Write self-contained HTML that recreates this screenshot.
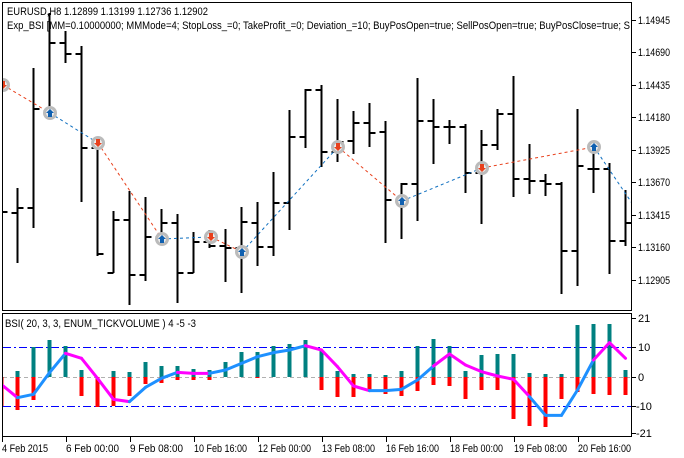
<!DOCTYPE html>
<html><head><meta charset="utf-8"><style>
html,body{margin:0;padding:0;background:#fff;width:684px;height:458px;overflow:hidden}
svg{display:block;font-family:"Liberation Sans",sans-serif;font-size:11px}
</style></head><body>
<svg id="s" width="684" height="458" xmlns="http://www.w3.org/2000/svg"></svg>
<script>
var o=[];
function P(s){o.push(s);}
var B=[[200,230,212,212],[188,263,213,208],[68,228,208,109],[13,110,111,43],[31,63,43,54],[46,202,54,148],[144,256,148,254],[211,273,273,220],[191,305,220,275],[197,281,275,237],[209,237,237,223],[214,303,223,273],[232,273,273,242],[230,248,242,246],[229,282,246,248],[207,293,248,222],[202,266,223,247],[172,256,247,203],[110,230,203,137],[89,148,137,90],[85,167,90,152],[99,162,152,142],[111,154,141,123],[103,147,123,133],[121,243,132,200],[183,239,200,184],[78,221,184,121],[99,164,121,127],[120,144,127,127],[124,193,127,173],[130,224,173,145],[109,150,145,114],[76,197,114,179],[144,194,179,181],[174,196,181,184],[182,294,184,251],[109,286,251,166],[141,193,169,169],[163,274,169,241],[190,246,241,223]];
function X(i){return 1.5+16*i;}
P('<defs><clipPath id="m"><rect x="3" y="3" width="629" height="307"/></clipPath><clipPath id="b"><rect x="3" y="314" width="629" height="123"/></clipPath></defs>');
P('<g clip-path="url(#m)">');
for(var i=0;i<B.length;i++){var x=X(i),b=B[i];
P('<rect x="'+(x-1)+'" y="'+b[0]+'" width="2" height="'+(b[1]-b[0])+'" fill="#000"/>');
P('<rect x="'+(x-6)+'" y="'+(b[2]-1)+'" width="6" height="2" fill="#000"/>');
P('<rect x="'+(x)+'" y="'+(b[3]-1)+'" width="6" height="2" fill="#000"/>');}
var M=[[-40,70,'B'],[3,85,'R'],[50,113,'B'],[98,143,'R'],[162,239,'B'],[211,237,'R'],[242,252,'B'],[338,147,'R'],[402,201,'B'],[482,168,'R'],[594,147,'B'],[640,215,'X']];
for(var i=0;i<M.length-1;i++){var a=M[i],c=M[i+1];var col=a[2]=='R'?'#e8401c':'#1070c0';
P('<line x1="'+a[0]+'" y1="'+a[1]+'" x2="'+c[0]+'" y2="'+c[1]+'" stroke="'+col+'" stroke-width="1" stroke-dasharray="3,3"/>');}
for(var i=1;i<M.length-1;i++){var a=M[i],x=a[0],y=a[1];
P('<circle cx="'+x+'" cy="'+y+'" r="5.5" fill="#ececec" stroke="#bbbbbb" stroke-width="3"/>');
if(a[2]=='B')P('<path d="M'+x+' '+(y-4)+'l4 4h-2v4h-4v-4h-2z" fill="#1060b0"/>');
else P('<path d="M'+x+' '+(y+4)+'l4 -4h-2v-4h-4v4h-2z" fill="#e8401c"/>');}
P('</g>');
P('<rect x="2.5" y="2.5" width="629" height="308" fill="none" stroke="#000"/>');
P('<text x="7" y="15" textLength="201" lengthAdjust="spacingAndGlyphs">EURUSD,H8  1.12899 1.13199 1.12736 1.12902</text>');
P('<text x="7" y="29" textLength="623" lengthAdjust="spacingAndGlyphs">Exp_BSI [MM=0.10000000; MMMode=4; StopLoss_=0; TakeProfit_=0; Deviation_=10; BuyPosOpen=true; SellPosOpen=true; BuyPosClose=true; S</text>');
var PL=[['1.14945',20],['1.14690',52],['1.14435',85],['1.14180',117],['1.13925',150],['1.13670',182],['1.13415',215],['1.13160',247],['1.12905',280]];
PL.forEach(function(p){P('<line x1="632" y1="'+(p[1]+.5)+'" x2="636" y2="'+(p[1]+.5)+'" stroke="#000"/><text x="638" y="'+(p[1]+4)+'" textLength="32" lengthAdjust="spacingAndGlyphs">'+p[0]+'</text>');});
var Z=377;
var T=[0,6,30,37,31,7,0,6,5,15,11,11,8,7,15,25,25,31,33,37,27,6,3,3,2,6,31,38,31,6,22,23,23,4,3,3,52,53,53,7];
var R=[29,33,23,0,0,19,30,29,19,7,6,3,3,3,0,0,1,0,0,0,13,20,20,13,17,19,14,8,9,22,13,13,42,49,50,22,15,17,18,18];
var L=[250,293,283,218,160,175,235,298,305,262,235,217,220,220,210,190,170,158,150,137,150,200,258,272,272,268,240,198,162,195,215,228,238,290,346,346,270,180,128,175];
var C='MBBBMMMMBBBMMBBBBBBMMMMBBBBMMMMMMBBBBMM';
P('<g clip-path="url(#b)">');
P('<line x1="3" y1="347.5" x2="632" y2="347.5" stroke="#0000ff" stroke-dasharray="8,3,2,3" shape-rendering="crispEdges"/>');
P('<line x1="3" y1="406.5" x2="632" y2="406.5" stroke="#0000ff" stroke-dasharray="8,3,2,3" shape-rendering="crispEdges"/>');
P('<line x1="3" y1="377.5" x2="632" y2="377.5" stroke="#b0b0b0" stroke-dasharray="4,3" shape-rendering="crispEdges"/>');
for(var i=0;i<40;i++){var x=X(i);
if(T[i])P('<rect x="'+(x-2)+'" y="'+(Z-T[i])+'" width="4" height="'+(T[i])+'" fill="#008080"/>');
if(R[i])P('<rect x="'+(x-2)+'" y="'+Z+'" width="4" height="'+R[i]+'" fill="#ff0000"/>');}
for(var i=0;i<39;i++){var y1=300+L[i]/3,y2=300+L[i+1]/3;
P('<line x1="'+(i==0?0:X(i))+'" y1="'+y1+'" x2="'+X(i+1)+'" y2="'+y2+'" stroke="'+(C[i]=='M'?'#ff00ff':'#1e90ff')+'" stroke-width="3" stroke-linecap="round"/>');}
P('</g>');
P('<rect x="2.5" y="313.5" width="629" height="123" fill="none" stroke="#000"/>');
P('<text x="5" y="327" textLength="191" lengthAdjust="spacingAndGlyphs">BSI( 20, 3, 3, ENUM_TICKVOLUME ) 4 -5 -3</text>');
[['21',318],['10',347],['0',377],['-10',406],['-21',433]].forEach(function(p){
P('<line x1="632" y1="'+(p[1]+.5)+'" x2="636" y2="'+(p[1]+.5)+'" stroke="#000"/><text x="'+(p[0].charAt(0)=='-'?636:638)+'" y="'+(p[1]+4)+'">'+p[0]+'</text>');});
var TL=['4 Feb 2015','6 Feb 00:00','9 Feb 08:00','10 Feb 16:00','12 Feb 00:00','13 Feb 08:00','16 Feb 16:00','18 Feb 00:00','19 Feb 08:00','20 Feb 16:00'];
TL.forEach(function(t,j){var x=2+64*j;P('<line x1="'+(x+0.5)+'" y1="437" x2="'+(x+0.5)+'" y2="442" stroke="#000"/><text x="'+x+'" y="452" textLength="'+(t.length>10?53:(j==0?46:50))+'" lengthAdjust="spacingAndGlyphs">'+t+'</text>');});
document.getElementById('s').innerHTML=o.join('');
</script>
</body></html>
